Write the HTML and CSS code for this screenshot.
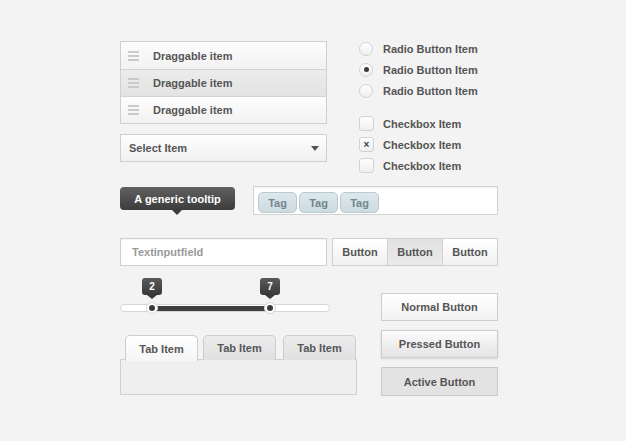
FILE: index.html
```html
<!DOCTYPE html>
<html>
<head>
<meta charset="utf-8">
<link rel="stylesheet" href="styles.css">
</head>
<body>
<div class="page">
  <div class="row top">
    <div class="col-left">
      <ul class="drag-list">
        <li class="drag-item"><span class="handle"><i></i><i></i><i></i></span>Draggable item</li>
        <li class="drag-item drag-item--hover"><span class="handle"><i></i><i></i><i></i></span>Draggable item</li>
        <li class="drag-item"><span class="handle"><i></i><i></i><i></i></span>Draggable item</li>
      </ul>
      <div class="select">Select Item<span class="caret"></span></div>
    </div>
    <div class="col-right">
      <div class="choices">
        <div class="choice"><span class="radio"></span>Radio Button Item</div>
        <div class="choice"><span class="radio radio--on"></span>Radio Button Item</div>
        <div class="choice"><span class="radio"></span>Radio Button Item</div>
      </div>
      <div class="choices choices--checks">
        <div class="choice"><span class="check"></span>Checkbox Item</div>
        <div class="choice"><span class="check check--on">×</span>Checkbox Item</div>
        <div class="choice"><span class="check"></span>Checkbox Item</div>
      </div>
    </div>
  </div>

  <div class="row mid">
    <div class="tooltip">A generic tooltip</div>
    <div class="tags">
      <span class="tag">Tag</span><span class="tag">Tag</span><span class="tag">Tag</span>
    </div>
  </div>

  <div class="row inputs">
    <div class="textinput">Textinputfield</div>
    <div class="btn-group">
      <span class="seg">Button</span><span class="seg seg--on">Button</span><span class="seg">Button</span>
    </div>
  </div>

  <div class="row bottom">
    <div class="col-bl">
      <div class="slider">
        <div class="track"><div class="fill"></div></div>
        <div class="knob" style="left:32px"><span class="bubble">2</span><span class="dot"></span></div>
        <div class="knob" style="left:150px"><span class="bubble">7</span><span class="dot"></span></div>
      </div>
      <div class="tabs">
        <div class="tab-bar">
          <span class="tab tab--on">Tab Item</span>
          <span class="tab">Tab Item</span>
          <span class="tab">Tab Item</span>
        </div>
        <div class="tab-panel"></div>
      </div>
    </div>
    <div class="col-br">
      <div class="btn">Normal Button</div>
      <div class="btn btn--pressed">Pressed Button</div>
      <div class="btn btn--active">Active Button</div>
    </div>
  </div>
</div>
</body>
</html>
```

FILE: styles.css
```css
* { box-sizing: border-box; }
html, body { margin: 0; padding: 0; }
body {
  background: #f3f3f3;
  font-family: "Liberation Sans", Arial, sans-serif;
  font-size: 11px;
  font-weight: bold;
  color: #555;
  width: 626px;
  height: 441px;
  overflow: hidden;
}
.page { padding: 41px 0 0 120px; width: 500px; }
.row { display: flex; align-items: flex-start; }

/* top */
.col-left { width: 207px; }
.drag-list {
  list-style: none; margin: 0; padding: 0;
  border: 1px solid #cfcfcf;
  background: #fff;
}
.drag-item {
  display: flex; align-items: center;
  height: 27px;
  padding-left: 7px;
  background: linear-gradient(#fdfdfd, #f2f2f2);
  border-top: 1px solid #d3d3d3;
}
.drag-item:first-child { border-top: 0; height: 27px; }
.drag-item--hover { background: linear-gradient(#ececec, #e3e3e3); }
.handle { width: 11px; margin-right: 14px; display: flex; flex-direction: column; gap: 2px; }
.handle i { display: block; height: 2px; background: #cacaca; }

.select {
  margin-top: 10px;
  height: 28px;
  border: 1px solid #cfcfcf;
  background: linear-gradient(#fefefe, #f0f0f0);
  display: flex; align-items: center; justify-content: space-between;
  padding: 0 7px 0 8px;
}
.caret {
  width: 0; height: 0;
  border-left: 4px solid transparent;
  border-right: 4px solid transparent;
  border-top: 5px solid #555;
}

.col-right { margin-left: 32px; margin-top: -3px; }
.choice { display: flex; align-items: center; height: 21px; }
.choices--checks { margin-top: 12px; }
.radio {
  width: 14px; height: 14px; border-radius: 50%;
  border: 1px solid #d2d2d2;
  background: linear-gradient(#ffffff, #efefef);
  margin-right: 10px;
  display: flex; align-items: center; justify-content: center;
}
.radio--on::after {
  content: ""; width: 5px; height: 5px; border-radius: 50%; background: #3a3a3a;
}
.check {
  width: 15px; height: 15px; border-radius: 3px;
  border: 1px solid #d2d2d2;
  background: linear-gradient(#ffffff, #efefef);
  margin-right: 9px;
  display: flex; align-items: center; justify-content: center;
  font-size: 10px; color: #444; line-height: 1;
}

/* mid */
.mid { margin-top: 10px; }
.tooltip {
  position: relative;
  margin-top: 1px;
  width: 115px; height: 23px;
  border-radius: 4px;
  background: linear-gradient(#616161, #3c3c3c);
  color: #fff;
  display: flex; align-items: center; justify-content: center;
}
.tooltip::after {
  content: ""; position: absolute; left: 52px; bottom: -5px;
  border-left: 5px solid transparent;
  border-right: 5px solid transparent;
  border-top: 5px solid #3c3c3c;
}
.tags {
  margin-left: 18px;
  width: 245px; height: 29px;
  background: #fff;
  border: 1px solid #d3d3d3;
  box-shadow: inset 0 1px 2px rgba(0,0,0,0.06);
  display: flex; align-items: center; gap: 2px;
  padding: 4px 0 0 4px;
}
.tag {
  width: 39px; height: 21px;
  border-radius: 5px;
  border: 1px solid #b9c9cf;
  background: linear-gradient(#dde8ec, #cddbe0);
  color: #71868e;
  display: flex; align-items: center; justify-content: center;
}

/* inputs */
.inputs { margin-top: 23px; }
.textinput {
  width: 207px; height: 28px;
  background: #fff;
  border: 1px solid #cfcfcf;
  box-shadow: inset 0 1px 2px rgba(0,0,0,0.05);
  color: #9a9a9a;
  display: flex; align-items: center; padding-left: 11px;
}
.btn-group {
  margin-left: 5px;
  display: flex; height: 28px; width: 166px;
  border: 1px solid #cfcfcf;
}
.seg {
  flex: 1;
  display: flex; align-items: center; justify-content: center;
  background: linear-gradient(#ffffff, #f1f1f1);
  border-left: 1px solid #d3d3d3;
}
.seg:first-child { border-left: 0; }
.seg--on { background: linear-gradient(#e2e2e2, #eaeaea); }

/* bottom */
.bottom { margin-top: 12px; }
.col-bl { width: 238px; }
.slider { position: relative; height: 44px; }
.track {
  position: absolute; left: 0; top: 26px;
  width: 210px; height: 8px;
  border-radius: 4px;
  background: #fff;
  border: 1px solid #d6d6d6;
}
.fill {
  position: absolute; left: 31px; top: 1px;
  width: 118px; height: 5px;
  background: #3f3f3f;
}
.knob { position: absolute; top: 0; width: 0; height: 0; }
.bubble {
  position: absolute; left: -10px; top: 0;
  width: 20px; height: 17px;
  border-radius: 3px;
  background: linear-gradient(#5a5a5a, #383838);
  color: #fff;
  display: flex; align-items: center; justify-content: center;
  font-size: 10px;
}
.bubble::after {
  content: ""; position: absolute; left: 5px; bottom: -4px;
  border-left: 5px solid transparent;
  border-right: 5px solid transparent;
  border-top: 4px solid #383838;
}
.dot {
  position: absolute; left: -6px; top: 24px;
  width: 12px; height: 12px; border-radius: 50%;
  background: #fff;
  border: 1px solid #d6d6d6;
  display: flex; align-items: center; justify-content: center;
}
.dot::after { content: ""; width: 6px; height: 6px; border-radius: 50%; background: #3a3a3a; }

.tabs { margin-top: 13px; }
.tab-bar { display: flex; gap: 5px; padding-left: 5px; height: 25px; position: relative; z-index: 1; }
.tab {
  width: 73px; height: 25px;
  border: 1px solid #cdcdcd;
  border-bottom: 0;
  border-radius: 5px 5px 0 0;
  background: linear-gradient(#ececec, #e0e0e0);
  display: flex; align-items: center; justify-content: center;
}
.tab:last-child { margin-left: 2px; }
.tab--on { background: linear-gradient(#ffffff, #f5f5f5); height: 26px; }
.tab-panel {
  margin-top: -1px;
  width: 237px; height: 36px;
  background: #efefef;
  border: 1px solid #d0d0d0;
}

.col-br { margin-left: 23px; margin-top: 15px; display: flex; flex-direction: column; }
.btn {
  width: 117px; height: 28px;
  border: 1px solid #cdcdcd;
  background: linear-gradient(#ffffff, #f2f2f2);
  display: flex; align-items: center; justify-content: center;
}
.btn + .btn { margin-top: 9px; }
.btn--pressed {
  background: linear-gradient(#fbfbfb, #e4e4e4);
  box-shadow: 0 1px 2px rgba(0,0,0,0.12);
}
.btn--active { background: #e3e3e3; border-color: #c9c9c9; height: 29px; }
```
